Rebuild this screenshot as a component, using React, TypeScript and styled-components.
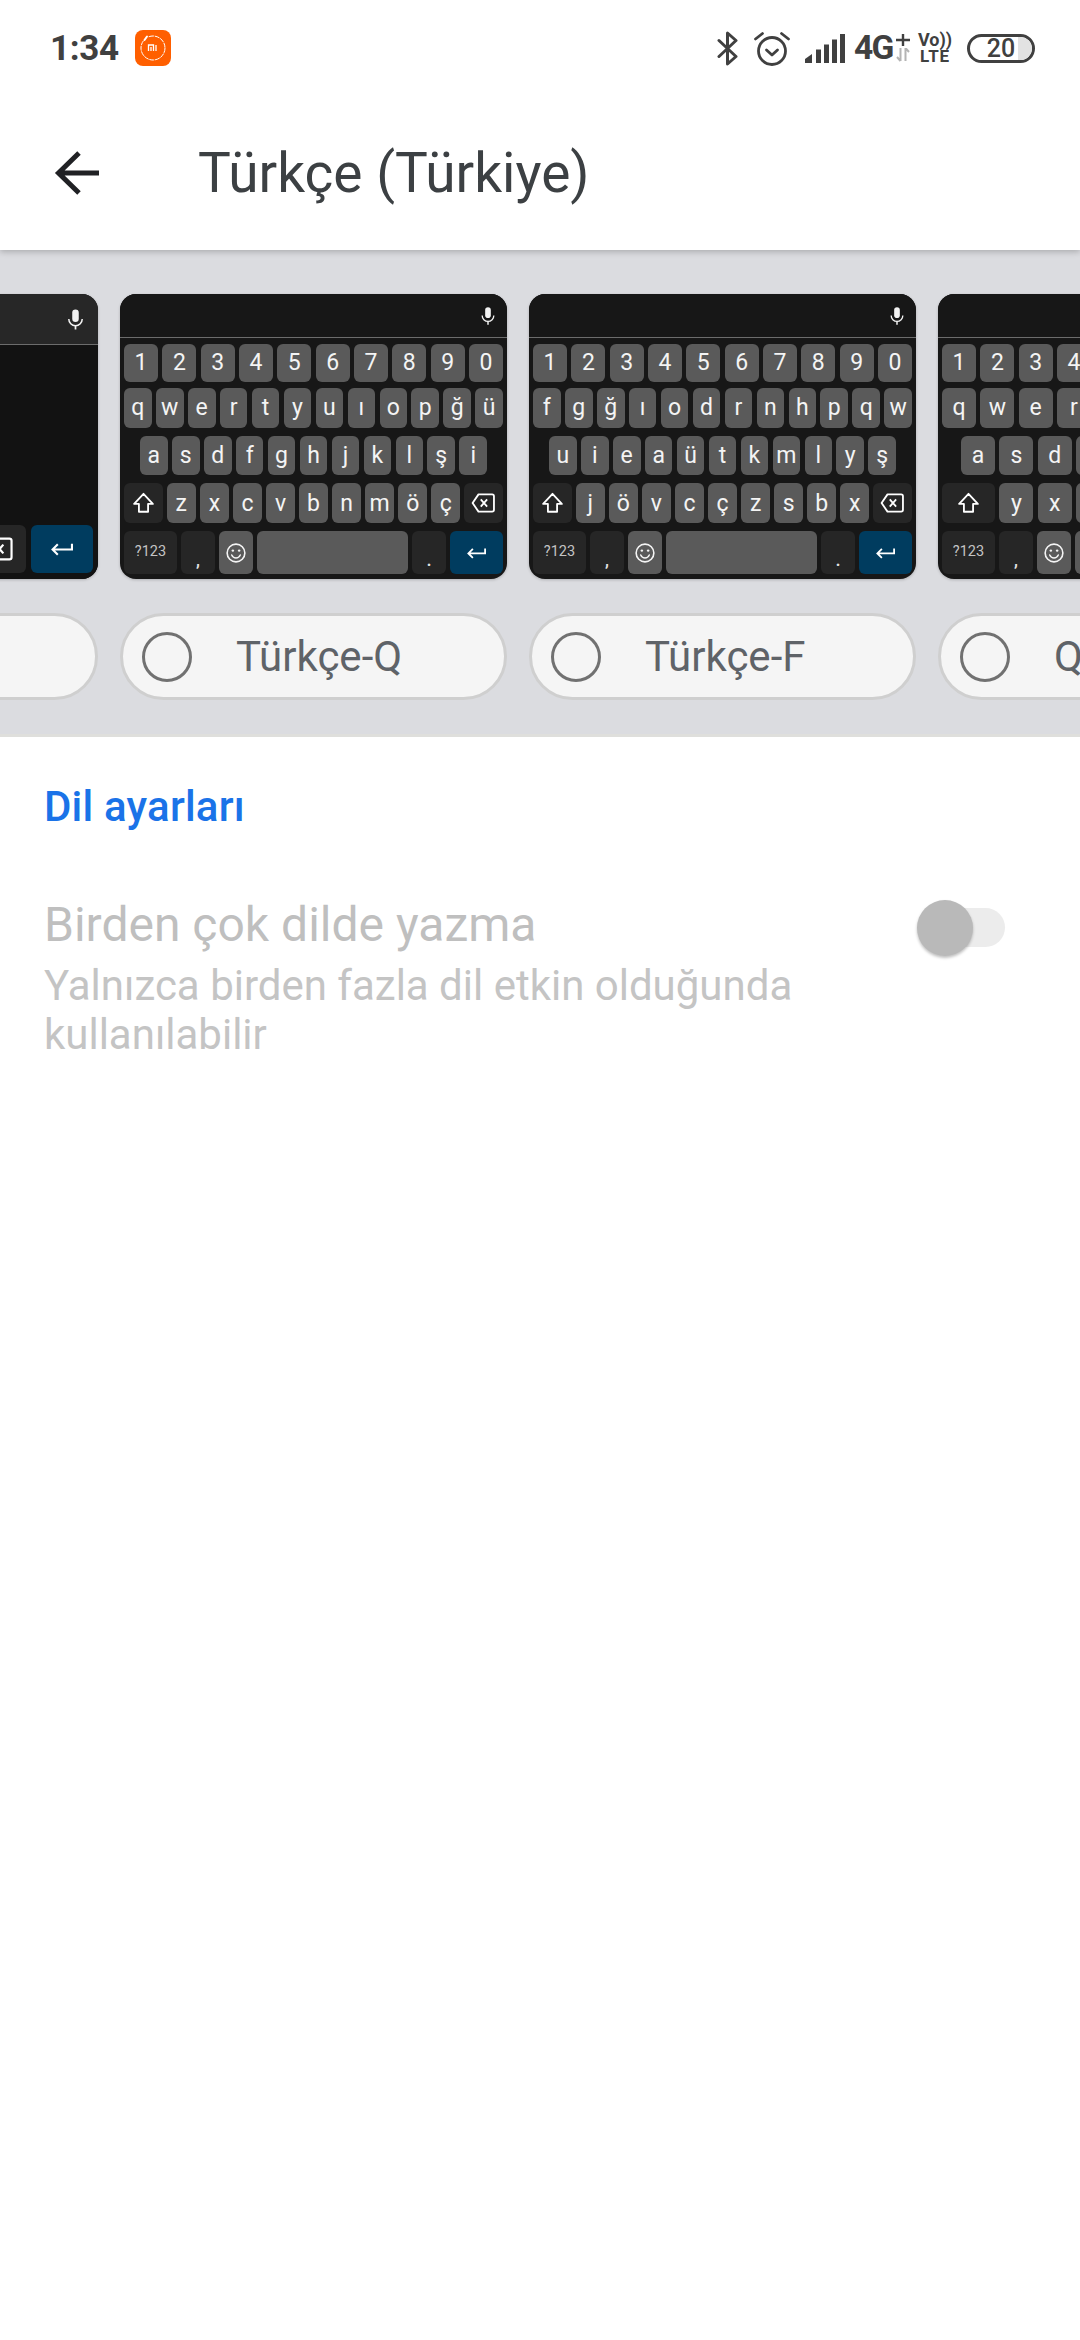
import React from "react";
import styled, { createGlobalStyle } from "styled-components";

const Global = createGlobalStyle`
  html, body { margin: 0; padding: 0; background: #fff; }
  body { font-family: Roboto, "Noto Sans", sans-serif; }
`;
const Page = styled.div`
  width: 1080px; height: 2340px; overflow: hidden; background: #fff; display: flex; flex-direction: column;
`;
const Header = styled.header`
  height: 250px; flex: none; background: #fff; position: relative; z-index: 1;
  box-shadow: 0 2px 6px rgba(0,0,0,.22); display: flex; flex-direction: column;
`;
const StatusBar = styled.div`
  height: 96px; flex: none; display: flex; align-items: center; padding: 0 45px 0 50px; color: #404040;
`;
const Time = styled.span`
  font-size: 35px; font-weight: 700; line-height: 1; color: #404040; width: 85px; letter-spacing: -.3px;
`;
const MiBadge = styled.svg`width: 36px; height: 36px; display: block;`;
const StatusRight = styled.div`
  margin-left: auto; display: flex; align-items: center;
`;
const StatIcon = styled.svg<{ $ml: number }>`
  display: block; margin-left: ${p => p.$ml}px; flex: none;
`;
const NetLabel = styled.span`
  font-size: 33.500px; font-weight: 700; line-height: 1; margin-left: 9px; color: #404040;
  letter-spacing: -1.800px; width: 37px; white-space: nowrap;
`;
const NetPlusColumn = styled.div`
  display: flex; flex-direction: column; align-items: center; margin-left: 5px; width: 14px; gap: 2px;
`;
const VoLte = styled.div`
  display: flex; flex-direction: column; align-items: center; margin-left: 8px; width: 34px;
  font-size: 17px; font-weight: 700; line-height: 16px; color: #404040; letter-spacing: .8px;
`;
const VoText = styled.span`font-size: 18px; letter-spacing: 0; white-space: nowrap;`;
const Battery = styled.div`
  margin-left: 15px; width: 68px; height: 29px; box-sizing: border-box; border: 3px solid #404040; border-radius: 15px;
  display: flex; align-items: center; justify-content: center; position: relative; overflow: hidden;
  font-size: 25px; font-weight: 500; color: #404040;
`;
const BatteryLevel = styled.span`
  position: absolute; right: 0; top: 0; bottom: 0; width: 14px; background: #e2e2e2; border-radius: 0 12px 12px 0;
`;
const BatteryText = styled.span`position: relative;`;
const Toolbar = styled.div`
  flex: 1; display: flex; align-items: center; padding: 0 0 0 52px;
`;
const BackIcon = styled.svg`width: 50px; height: 50px; display: block; flex: none;`;
const Title = styled.h1`
  margin: 0 0 0 96px; font-family: Roboto, sans-serif; font-size: 55px; font-weight: 400; color: #3c4043; line-height: 1;
`;
const Band = styled.section`
  height: 487px; flex: none; background: #dbdce0; overflow: hidden; box-sizing: border-box; padding-top: 44px;
  border-bottom: 3px solid #dfdfdc;
`;
const Carousel = styled.div`
  display: flex; gap: 22px; margin-left: -289px; width: max-content;
`;
const Column = styled.div`
  width: 387px; display: flex; flex-direction: column; gap: 34px; flex: none;
`;
const Card = styled.div`
  height: 285px; border-radius: 16px; background: #171717; overflow: hidden; display: flex; flex-direction: column;
  box-shadow: 0 1px 3px rgba(0,0,0,.2);
`;
const Suggest = styled.div<{ $h: number; $bg: string; $pr: number }>`
  height: ${p => p.$h}px; flex: none; background: ${p => p.$bg}; border-bottom: 1px solid #6c6c6c;
  display: flex; align-items: center; justify-content: flex-end; padding-right: ${p => p.$pr}px;
`;
const Mic = styled.svg<{ $s: number }>`width: ${p => p.$s}px; height: ${p => p.$s}px; display: block;`;
const Keys = styled.div`
  flex: 1; display: flex; flex-direction: column; padding: 5.500px 4px 5px;
`;
const Row = styled.div<{ $h: number; $pad?: number; $gapTop?: number }>`
  display: flex; gap: 4.300px; height: ${p => p.$h}px; padding: 0 ${p => p.$pad || 0}px; margin-top: ${p => p.$gapTop || 0}px;
`;
const Key = styled.div<{ $w?: number; $tone?: "dark" | "enter" }>`
  flex: ${p => (p.$w ? `0 0 ${p.$w}px` : "1 1 0")}; min-width: 0; border-radius: 6px;
  background: ${p => (p.$tone === "dark" ? "#262626" : p.$tone === "enter" ? "#003c5f" : "#5a5a5a")};
  color: #f4f4f4; display: flex; align-items: center; justify-content: center;
  font-size: 23px; line-height: 1; font-family: Roboto, sans-serif;
`;
const SmallLabel = styled.span`font-size: 14.500px; color: #c4c4c4;`;
const PunctLabel = styled.span`font-size: 16px; color: #e2e2e2; padding-top: 16px; font-weight: 700;`;
const KeyIcon = styled.svg<{ $w: number; $h: number }>`width: ${p => p.$w}px; height: ${p => p.$h}px; display: block;`;
const BlankBody = styled.div`
  flex: 1; background: #121212; display: flex; align-items: flex-end; justify-content: flex-end; gap: 5px; padding: 0 5px 6px;
`;
const BlankKey = styled.div<{ $w: number; $enter?: boolean }>`
  width: ${p => p.$w}px; height: 48px; border-radius: 6px; background: ${p => (p.$enter ? "#003c5f" : "#262626")};
  display: flex; align-items: center; justify-content: center; flex: none;
`;
const Pill = styled.div`
  height: 87px; box-sizing: border-box; border: 3px solid #cfcfcf; border-radius: 44px; background: #f5f5f5;
  display: flex; align-items: center; padding-left: 19px;
`;
const Radio = styled.span`
  width: 50px; height: 50px; box-sizing: border-box; border: 3px solid #717171; border-radius: 50%; flex: none; background: transparent;
`;
const PillText = styled.span`
  margin-left: 44px; font-size: 42px; color: #5f6368; line-height: 1; white-space: nowrap;
`;
const Settings = styled.section`
  padding: 45px 44px 0;
`;
const SectionTitle = styled.h2`
  margin: 0; font-size: 42px; font-weight: 500; color: #1a73e8; line-height: 50px; letter-spacing: .2px;
`;
const Pref = styled.div`
  margin-top: 63px; display: flex; justify-content: space-between; align-items: flex-start;
`;
const PrefText = styled.div`width: 780px;`;
const PrefTitle = styled.div`font-size: 48px; color: #bfbfbf; line-height: 60px;`;
const PrefSub = styled.div`font-size: 42px; color: #c4c4c4; line-height: 49px; margin-top: 6px;`;
const Switch = styled.div`
  position: relative; width: 80px; height: 39px; background: #ececec; border-radius: 20px; margin: 13px 31px 0 0; flex: none;
`;
const Thumb = styled.span`
  position: absolute; left: -8px; top: -8px; width: 56px; height: 56px; border-radius: 50%; background: #b9b9b9;
  box-shadow: 0 2px 3px rgba(0,0,0,.25);
`;

const MicIcon = ({ s }: { s: number }) => (
  <Mic $s={s} viewBox="0 0 24 24" fill="none">
    <rect x="8.600" y="1.500" width="6.800" height="13" rx="3.400" fill="#f2f2f2" />
    <path d="M5 11.500a7 7 0 0 0 14 0" stroke="#f2f2f2" strokeWidth="1.600" />
    <path d="M12 18.500v4" stroke="#f2f2f2" strokeWidth="1.800" />
  </Mic>
);
const Shift = () => (
  <KeyIcon $w={23} $h={22} viewBox="0 0 24 24" fill="none">
    <path d="M12 2 1.800 13H7v8.500h10V13h5.200L12 2Z" stroke="#fff" strokeWidth="2" strokeLinejoin="round" />
  </KeyIcon>
);
const BackspaceIcon = ({ w, h }: { w: number; h: number }) => (
  <KeyIcon $w={w} $h={h} viewBox="0 0 27 22" fill="none">
    <path d="M8 1.500h15a2 2 0 0 1 2 2v15a2 2 0 0 1-2 2H8L1.500 11 8 1.500Z" stroke="#fff" strokeWidth="2" strokeLinejoin="round" />
    <path d="m10.500 7 7 8m0-8-7 8" stroke="#fff" strokeWidth="2" />
  </KeyIcon>
);
const Emoji = () => (
  <KeyIcon $w={20} $h={20} viewBox="0 0 21 21" fill="none">
    <circle cx="10.500" cy="10.500" r="9.300" stroke="#f4f4f4" strokeWidth="1.700" />
    <circle cx="7.200" cy="8" r="1.300" fill="#f4f4f4" />
    <circle cx="13.800" cy="8" r="1.300" fill="#f4f4f4" />
    <path d="M6 12.600c1 2.200 2.600 3.200 4.500 3.200s3.500-1 4.500-3.200" stroke="#f4f4f4" strokeWidth="1.600" strokeLinecap="round" />
  </KeyIcon>
);
const Enter = ({ w, h }: { w: number; h: number }) => (
  <KeyIcon $w={w} $h={h} viewBox="0 0 21 13" fill="none">
    <path d="M20 1.500v5.500H2M6.500 2 1.500 7l5 5" stroke="#fff" strokeWidth="2" />
  </KeyIcon>
);

const Letter = ({ c }: { c: string }) => <Key>{c}</Key>;

type Layout = { row2: string[]; row3: string[]; row4: string[]; row3Pad: number; shift: number };

const Keyboard = ({ row2, row3, row4, row3Pad, shift }: Layout) => (
  <Card>
    <Suggest $h={43} $bg="#171717" $pr={9.500}><MicIcon s={20} /></Suggest>
    <Keys>
      <Row $h={38}>{"1234567890".split("").map(c => <Letter key={c} c={c} />)}</Row>
      <Row $h={39.500} $gapTop={6.500}>{row2.map(c => <Letter key={c} c={c} />)}</Row>
      <Row $h={39} $pad={row3Pad} $gapTop={8.500}>{row3.map(c => <Letter key={c} c={c} />)}</Row>
      <Row $h={40} $gapTop={8}>
        <Key $w={shift} $tone="dark"><Shift /></Key>
        {row4.map(c => <Letter key={c} c={c} />)}
        <Key $w={shift} $tone="dark"><BackspaceIcon w={25} h={20} /></Key>
      </Row>
      <Row $h={43} $gapTop={8}>
        <Key $w={53} $tone="dark"><SmallLabel>?123</SmallLabel></Key>
        <Key $w={33.500} $tone="dark"><PunctLabel>,</PunctLabel></Key>
        <Key $w={33.500}><Emoji /></Key>
        <Key />
        <Key $w={33.500} $tone="dark"><PunctLabel>.</PunctLabel></Key>
        <Key $w={53} $tone="enter"><Enter w={19} h={12} /></Key>
      </Row>
    </Keys>
  </Card>
);

const BlankBoard = () => (
  <Card>
    <Suggest $h={50} $bg="#272727" $pr={11}><MicIcon s={23} /></Suggest>
    <BlankBody>
      <BlankKey $w={54}><BackspaceIcon w={30} h={24} /></BlankKey>
      <BlankKey $w={62} $enter><Enter w={22} h={14} /></BlankKey>
    </BlankBody>
  </Card>
);

const Choice = ({ label, children }: { label: string; children: React.ReactNode }) => (
  <Column>
    {children}
    <Pill>
      <Radio />
      <PillText>{label}</PillText>
    </Pill>
  </Column>
);

export default function App() {
  return (
    <Page>
      <Global />
      <Header>
        <StatusBar>
          <Time>1:34</Time>
          <MiBadge viewBox="0 0 36 36">
            <rect width="36" height="36" rx="8" fill="#ff5f00" />
            <circle cx="18" cy="18" r="12" fill="none" stroke="#fff" strokeWidth="1" strokeDasharray="5 .8" />
            <path d="M8.500 10.500 12 6" stroke="#ff5f00" strokeWidth="4" />
            <path d="M9.500 10 12 6.500" stroke="#fff" strokeWidth="2" strokeLinecap="round" />
            <path d="M13.500 21v-6h5v6M16 21v-4M21 15v6" fill="none" stroke="#fff" strokeWidth="1.300" />
          </MiBadge>
          <StatusRight>
            <StatIcon $ml={0} width="22" height="35" viewBox="0 0 22 35" fill="none">
              <path d="M2 9.500 19 25.500 10.500 33V2L19 9.500 2 25.500" stroke="#404040" strokeWidth="3" strokeLinecap="round" strokeLinejoin="round" />
            </StatIcon>
            <StatIcon $ml={15} width="36" height="35" viewBox="0 0 36 35" fill="none">
              <circle cx="18" cy="20" r="13.500" stroke="#404040" strokeWidth="2.800" />
              <path d="m12.500 19 5.500 5 5.500-5" stroke="#404040" strokeWidth="2.800" strokeLinecap="round" strokeLinejoin="round" />
              <path d="m1.500 8 7-5.500M34.500 8l-7-5.500" stroke="#404040" strokeWidth="2.800" strokeLinecap="round" />
            </StatIcon>
            <StatIcon $ml={15} width="40" height="29" viewBox="0 0 40 29" fill="#404040">
              <path d="M0 29v-4l7-5v9H0Z" />
              <rect x="11" y="15.500" width="5" height="13.500" />
              <rect x="19" y="10.500" width="5" height="18.500" />
              <rect x="27" y="5.500" width="5" height="23.500" />
              <rect x="35" y="0" width="5" height="29" />
            </StatIcon>
            <NetLabel>4G</NetLabel>
            <NetPlusColumn>
              <StatIcon $ml={0} width="14" height="12" viewBox="0 0 14 12" fill="none">
                <path d="M7 0v12M0 6h14" stroke="#404040" strokeWidth="2.400" />
              </StatIcon>
              <StatIcon $ml={0} width="14" height="14" viewBox="0 0 14 14" fill="none">
                <path d="M4.500 0v13M4.500 13 1 9M9.500 13V0M9.500 0 13 4" stroke="#b4b4b4" strokeWidth="2" />
              </StatIcon>
            </NetPlusColumn>
            <VoLte><VoText>Vo))</VoText><span>LTE</span></VoLte>
            <Battery>
              <BatteryLevel />
              <BatteryText>20</BatteryText>
            </Battery>
          </StatusRight>
        </StatusBar>
        <Toolbar>
          <BackIcon viewBox="0 0 50 50" fill="none">
            <path d="M47 25H6M27 5 6.500 25 27 45" stroke="#202124" strokeWidth="5" />
          </BackIcon>
          <Title>Türkçe (Türkiye)</Title>
        </Toolbar>
      </Header>
      <Band>
        <Carousel>
          <Choice label=""><BlankBoard /></Choice>
          <Choice label="Türkçe-Q">
            <Keyboard
              row2={"q w e r t y u ı o p ğ ü".split(" ")}
              row3={"a s d f g h j k l ş i".split(" ")}
              row4={"z x c v b n m ö ç".split(" ")}
              row3Pad={16}
              shift={38.600}
            />
          </Choice>
          <Choice label="Türkçe-F">
            <Keyboard
              row2={"f g ğ ı o d r n h p q w".split(" ")}
              row3={"u i e a ü t k m l y ş".split(" ")}
              row4={"j ö v c ç z s b x".split(" ")}
              row3Pad={16}
              shift={38.600}
            />
          </Choice>
          <Choice label="QWERTY">
            <Keyboard
              row2={"q w e r t y u ı o p".split(" ")}
              row3={"a s d f g h j k l".split(" ")}
              row4={"y x c v b n m".split(" ")}
              row3Pad={19}
              shift={53}
            />
          </Choice>
        </Carousel>
      </Band>
      <Settings>
        <SectionTitle>Dil ayarları</SectionTitle>
        <Pref>
          <PrefText>
            <PrefTitle>Birden çok dilde yazma</PrefTitle>
            <PrefSub>Yalnızca birden fazla dil etkin olduğunda kullanılabilir</PrefSub>
          </PrefText>
          <Switch><Thumb /></Switch>
        </Pref>
      </Settings>
    </Page>
  );
}
